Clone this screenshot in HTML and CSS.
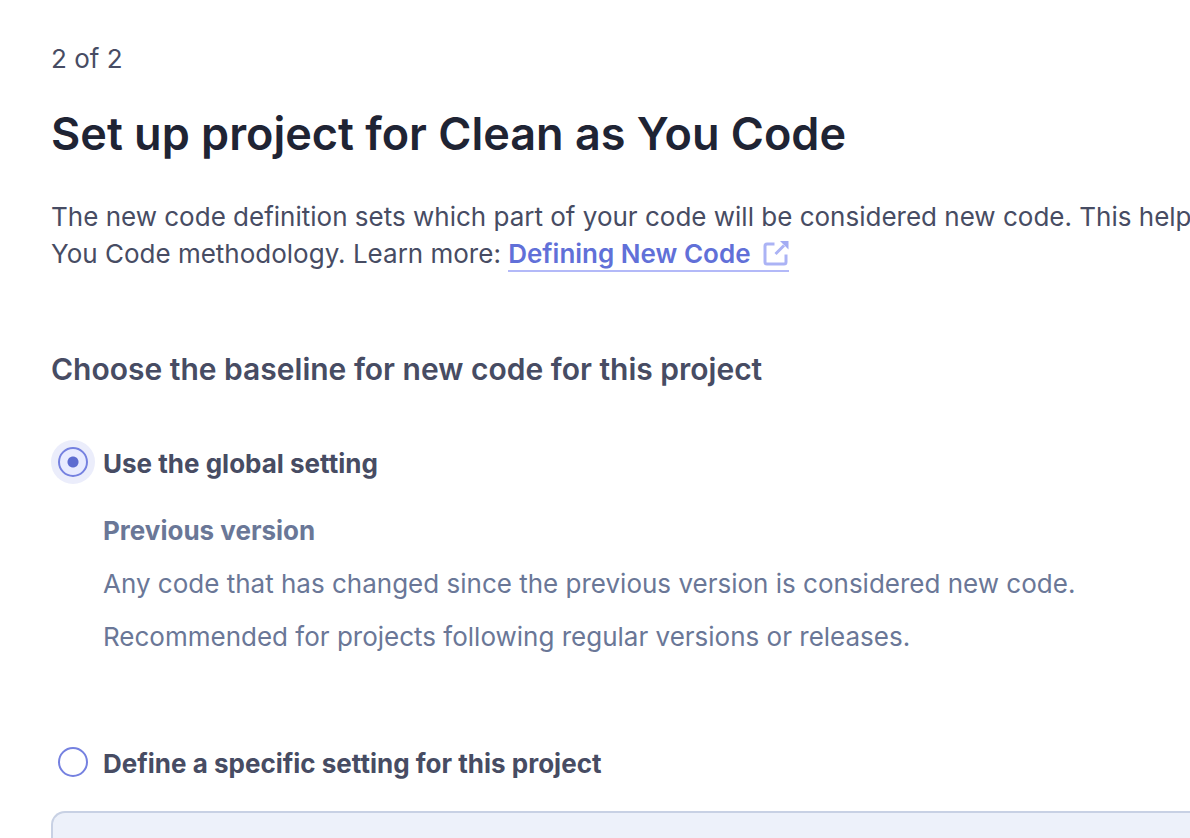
FILE: index.html
```html
<!DOCTYPE html>
<html lang="en">
<head>
<meta charset="utf-8">
<title>Set up project for Clean as You Code</title>
<link rel="stylesheet" href="styles.css">
</head>
<body>
<main class="page">
  <p class="step">2 of 2</p>
  <h1 class="title">Set up project for Clean as You Code</h1>
  <div class="intro">
    <p class="intro-line">The new code definition sets which part of your code will be considered new code. This help</p>
    <p class="intro-line">You Code methodology. Learn more: <a class="link" href="#">Defining New Code<svg class="link-icon" viewBox="0 0 26 26" aria-hidden="true"><path class="link-frame" d="M11.500 3H4a2 2 0 0 0-2 2V21a2 2 0 0 0 2 2h17a2 2 0 0 0 2-2v-7.500M12.500 13 21 4.500"/><path class="link-arrow" d="M17 0h8.500v8.500z"/></svg></a></p>
  </div>
  <form class="baseline">
    <h2 class="subtitle">Choose the baseline for new code for this project</h2>
    <label class="option"><input class="radio" type="radio" name="baseline" checked>Use the global setting</label>
    <div class="details">
      <p class="details-title">Previous version</p>
      <p>Any code that has changed since the previous version is considered new code.</p>
      <p>Recommended for projects following regular versions or releases.</p>
    </div>
    <label class="option"><input class="radio" type="radio" name="baseline">Define a specific setting for this project</label>
    <div class="card"></div>
  </form>
</main>
</body>
</html>
```
FILE: styles.css
```css
* { box-sizing: border-box; }
body {
  margin: 0;
  background: #fff;
  color: #474c63;
  font: 400 26px/38px Inter, sans-serif;
}
p, h1, h2 { margin: 0; }
.page {
  display: flex;
  flex-direction: column;
  min-height: 100vh;
  padding: 40px 0 0 51px;
  overflow: hidden;
}
.title {
  margin-top: 24px;
  color: #1f2434;
  font-size: 45px;
  line-height: 64px;
  font-weight: 600;
}
.intro {
  margin-top: 32px;
  line-height: 37px;
}
.intro-line { white-space: nowrap; }
.link {
  display: inline-flex;
  align-items: center;
  gap: 12px;
  height: 34px;
  border-bottom: 2px solid #b3b9f8;
  color: #6170d8;
  font-weight: 600;
  text-decoration: none;
}
.link-icon {
  width: 26px;
  height: 26px;
}
.link-frame {
  fill: none;
  stroke: #abb3f5;
  stroke-width: 3;
}
.link-arrow { fill: #a3acf3; }
.baseline {
  display: flex;
  flex: 1;
  flex-direction: column;
}
.subtitle {
  margin-top: 77px;
  font-size: 30px;
  line-height: 40px;
  font-weight: 600;
}
.option {
  display: flex;
  align-items: center;
  gap: 15px;
  margin-top: 56px;
  padding-left: 7px;
  font-weight: 700;
}
.radio {
  appearance: none;
  width: 30px;
  height: 30px;
  margin: 0 0 4px;
  border: 2px solid #7581e0;
  border-radius: 50%;
  background: #fff;
}
.radio:checked {
  background: radial-gradient(circle, #5d6cd0 5px, #e8ebff 6px);
  box-shadow: 0 0 0 7px #ebedfb;
}
.details {
  display: grid;
  gap: 15px;
  margin-top: 29px;
  padding-left: 52px;
  color: #6a7797;
}
.details-title { font-weight: 700; }
.details + .option { margin-top: 89px; }
.card {
  flex: 1;
  margin-top: 28px;
  border: 2px solid #c8d1e4;
  border-width: 2px 0 0 2px;
  border-radius: 14px 0 0 0;
  background: #edf1fa;
}
```
